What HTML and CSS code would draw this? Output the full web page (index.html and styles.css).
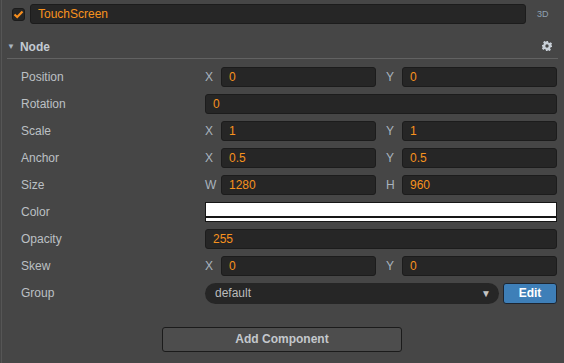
FILE: index.html
```html
<!DOCTYPE html>
<html>
<head>
  <title>Inspector</title>
  <link rel="stylesheet" href="styles.css">
</head>
<body>
  <div class="inspector">
    <div class="node-head">
      <span class="check">
        <svg width="11" height="9" viewBox="0 0 11 9"><path d="M1.5 4.5 L4.2 7 L9.5 1.5" fill="none" stroke="#f68e1e" stroke-width="2.2"/></svg>
      </span>
      <div class="name-input">TouchScreen</div>
      <span class="mode">3D</span>
    </div>

    <div class="section-head">
      <span class="fold">&#9660;</span>
      <span class="section-title">Node</span>
      <svg class="gear" width="10" height="10" viewBox="0 0 10 10">
        <path d="M4 0h2l.3 1.4 1.2.6 1.2-.8 1.4 1.4-.8 1.2.5 1.2L10 4v2l-1.4.3-.5 1.2.8 1.2-1.4 1.4-1.2-.8-1.2.5L6 10H4l-.3-1.4-1.2-.5-1.2.8-1.4-1.4.8-1.2-.5-1.2L0 6V4l1.4-.3.5-1.2-.8-1.2 1.4-1.4 1.2.8 1.2-.6z M5 3.3a1.7 1.7 0 1 0 0 3.4a1.7 1.7 0 1 0 0-3.4z" fill="#c9d0d8" fill-rule="evenodd"/>
      </svg>
    </div>

    <div class="props">
      <div class="prop">
        <span class="label">Position</span>
        <div class="value vec">
          <div class="field"><span class="axis">X</span><div class="input">0</div></div>
          <div class="field"><span class="axis">Y</span><div class="input">0</div></div>
        </div>
      </div>
      <div class="prop">
        <span class="label">Rotation</span>
        <div class="value"><div class="input">0</div></div>
      </div>
      <div class="prop">
        <span class="label">Scale</span>
        <div class="value vec">
          <div class="field"><span class="axis">X</span><div class="input">1</div></div>
          <div class="field"><span class="axis">Y</span><div class="input">1</div></div>
        </div>
      </div>
      <div class="prop">
        <span class="label">Anchor</span>
        <div class="value vec">
          <div class="field"><span class="axis">X</span><div class="input">0.5</div></div>
          <div class="field"><span class="axis">Y</span><div class="input">0.5</div></div>
        </div>
      </div>
      <div class="prop">
        <span class="label">Size</span>
        <div class="value vec">
          <div class="field"><span class="axis">W</span><div class="input">1280</div></div>
          <div class="field"><span class="axis">H</span><div class="input">960</div></div>
        </div>
      </div>
      <div class="prop">
        <span class="label">Color</span>
        <div class="value"><div class="color-box"><div class="alpha"></div></div></div>
      </div>
      <div class="prop">
        <span class="label">Opacity</span>
        <div class="value"><div class="input">255</div></div>
      </div>
      <div class="prop">
        <span class="label">Skew</span>
        <div class="value vec">
          <div class="field"><span class="axis">X</span><div class="input">0</div></div>
          <div class="field"><span class="axis">Y</span><div class="input">0</div></div>
        </div>
      </div>
      <div class="prop">
        <span class="label">Group</span>
        <div class="value group">
          <div class="select">default<span class="caret">&#9660;</span></div>
          <div class="edit-btn">Edit</div>
        </div>
      </div>
    </div>

    <div class="footer">
      <div class="add-btn">Add Component</div>
    </div>
  </div>
</body>
</html>
```

FILE: styles.css
```css
body {
  margin: 0;
  background: #464646;
  font-family: "Liberation Sans", Arial, sans-serif;
  font-size: 12px;
  color: #bcc0c4;
}

.inspector {
  height: 363px;
  border-left: 1px solid #565656;
  margin-left: 1px;
  box-sizing: border-box;
}

.node-head {
  display: flex;
  align-items: center;
  padding: 4px 0 0 10px;
  height: 20px;
}

.check {
  width: 13px;
  height: 13px;
  box-sizing: border-box;
  background: #262626;
  border: 1px solid #1b1b1b;
  border-radius: 3px;
  display: flex;
  align-items: center;
  justify-content: center;
  margin-right: 5px;
}

.name-input {
  width: 496px;
  height: 20px;
  box-sizing: border-box;
  background: #262626;
  border: 1px solid #1c1c1c;
  border-radius: 3px;
  color: #f7921e;
  padding-left: 7px;
  line-height: 18px;
  font-size: 12px;
}

.mode {
  margin-left: 11px;
  font-size: 9px;
  color: #8fa0b2;
}

.section-head {
  display: flex;
  align-items: center;
  margin: 13px 6px 0 5px;
  height: 21px;
  border-bottom: 1px solid #626262;
}

.fold {
  font-size: 8px;
  color: #a8b4c0;
  margin-right: 5px;
  padding-bottom: 2px;
}

.section-title {
  font-weight: bold;
  color: #c3cad2;
  flex: 1;
  padding-bottom: 2px;
}

.gear {
  margin-right: 6px;
  margin-bottom: 3px;
}

.props {
  display: flex;
  flex-direction: column;
  gap: 7px;
  padding: 8px 7px 0 19px;
}

.prop {
  display: flex;
  align-items: center;
  height: 20px;
}

.label {
  width: 184px;
}

.value {
  flex: 1;
  display: flex;
}

.vec {
  gap: 10px;
}

.field {
  flex: 1;
  display: flex;
  align-items: center;
}

.axis {
  width: 16px;
  color: #a9b4bf;
}

.input {
  flex: 1;
  height: 20px;
  box-sizing: border-box;
  background: #262626;
  border: 1px solid #1c1c1c;
  border-radius: 3px;
  color: #f7921e;
  padding-left: 7px;
  line-height: 18px;
}

.color-box {
  flex: 1;
  height: 20px;
  box-sizing: border-box;
  background: #fff;
  border: 1px solid #161616;
  position: relative;
}

.alpha {
  position: absolute;
  left: 0;
  right: 0;
  bottom: 0;
  height: 3px;
  border-top: 2px solid #161616;
  background: #fff;
}

.group {
  gap: 4px;
}

.select {
  flex: 1;
  height: 21px;
  background: #262626;
  border-radius: 11px;
  padding: 0 8px 0 10px;
  line-height: 21px;
  color: #bcbcbc;
  display: flex;
  justify-content: space-between;
}

.caret {
  font-size: 10px;
  color: #c4c4c4;
}

.edit-btn {
  width: 54px;
  height: 21px;
  box-sizing: border-box;
  background: #3e7fb8;
  border: 1px solid #1d2530;
  border-radius: 3px;
  color: #fff;
  font-weight: bold;
  text-align: center;
  line-height: 19px;
}

.footer {
  display: flex;
  justify-content: center;
  margin-top: 24px;
  margin-left: -2px;
}

.add-btn {
  width: 240px;
  height: 25px;
  box-sizing: border-box;
  background: #4d4d4d;
  border: 1px solid #1b1b1b;
  border-radius: 3px;
  color: #c4c8cc;
  font-weight: bold;
  text-align: center;
  line-height: 23px;
}
```
